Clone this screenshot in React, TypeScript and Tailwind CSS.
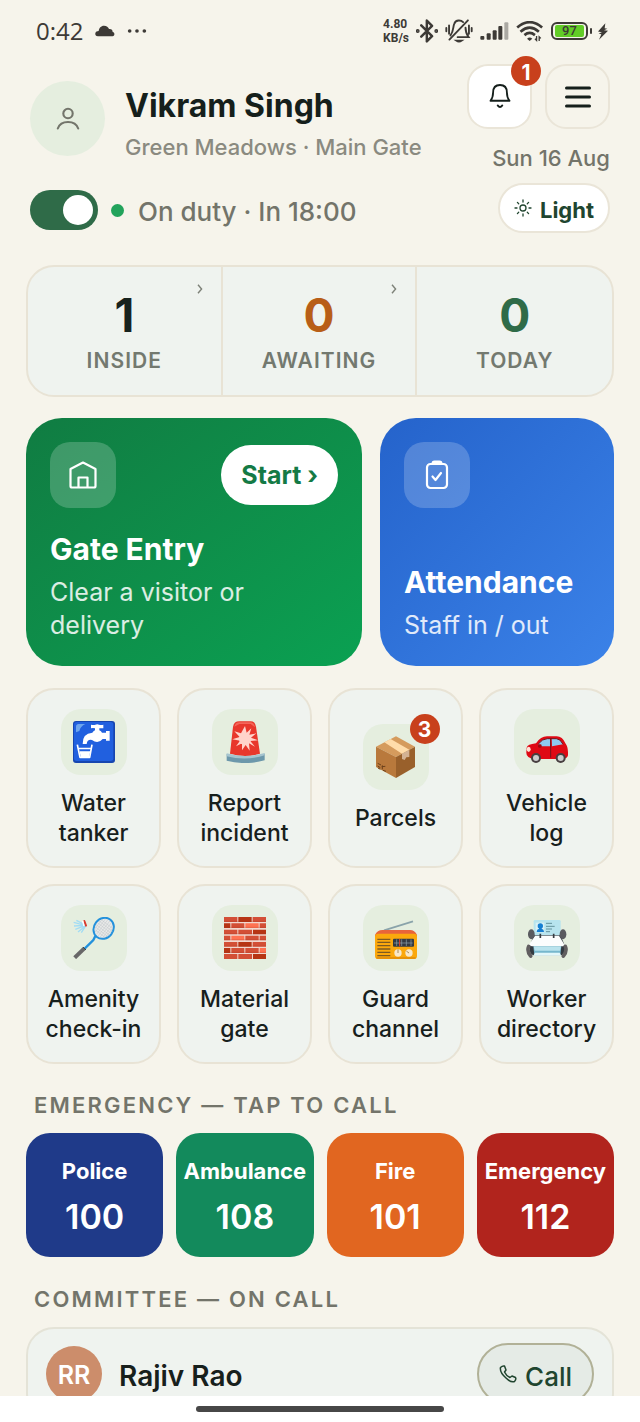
import type { ReactNode } from 'react';

/* ---------- status bar ---------- */

function StatusBar() {
  return (
    <div className="flex h-14 shrink-0 items-center justify-between pt-1.5 pr-8 pl-9 text-[#3d3a36]">
      <div className="flex items-center gap-3">
        <span className="font-['Open_Sans','Noto_Sans',sans-serif] text-2xl font-medium">0:42</span>
        <svg viewBox="0 0 60 34" className="h-3 w-5" fill="currentColor" aria-hidden="true">
          <path d="M9 33C2 33 0 28 1 24c1-5 5-7 10-7C12 8 18 1 27 1c8 0 13 4 15 10 7-1 11 3 11 9 4 1 6 4 5 8-1 4-4 5-8 5Z" />
        </svg>
        <svg viewBox="0 0 56 12" className="h-1 w-5" fill="currentColor" aria-hidden="true">
          <circle cx="6" cy="6" r="5.5" />
          <circle cx="28" cy="6" r="5.5" />
          <circle cx="50" cy="6" r="5.5" />
        </svg>
      </div>
      <div className="flex items-center gap-[7px]">
        <span className="flex flex-col font-[Roboto,sans-serif] text-[12px] leading-[14px] font-bold">
          <span>4.80</span>
          <span>KB/s</span>
        </span>
        <svg viewBox="0 0 63 68" className="h-6 w-[22px]" fill="none" stroke="currentColor" strokeWidth="7" strokeLinejoin="round" strokeLinecap="round" aria-hidden="true">
          <path d="M15 18 46 49 31 64V4L46 19 15 50" />
          <circle cx="5" cy="34" r="2" fill="currentColor" />
          <circle cx="58" cy="34" r="2" fill="currentColor" />
        </svg>
        <svg viewBox="0 0 80 70" className="h-6 w-7" fill="none" stroke="currentColor" strokeWidth="5.5" strokeLinecap="round" aria-hidden="true">
          <path d="M3 26v10M11 19v24M69 19v24M77 26v10M52 9C46 3 31 1 26 14c-4 9-1 21-11 34M36 53h32c-7-9-9-16-9-28M66 4 12 60" />
          <path d="M32 63q8 6 16 0Z" fill="currentColor" />
        </svg>
        <svg viewBox="0 0 87 54" className="h-[18px] w-[29px]" fill="currentColor" aria-hidden="true">
          <rect x="1" y="42" width="12" height="11" rx="3" />
          <rect x="20" y="34" width="12" height="19" rx="3" />
          <rect x="38" y="25" width="12" height="28" rx="3" />
          <rect x="55" y="12" width="12" height="41" rx="3" />
          <rect x="73" y="1" width="12" height="52" rx="3" opacity=".4" />
        </svg>
        <svg viewBox="0 0 84 64" className="h-[21px] w-7" fill="none" stroke="currentColor" strokeWidth="8" aria-hidden="true">
          <path d="M3 20Q41-13 79 20M13 33Q41 8 69 33M25 43Q41 30 57 43" />
          <path d="M33 54q8-7 16 0l-8 7Z" fill="currentColor" stroke="none" />
          <path d="M62 46v13l-5-5M70 61V48l5 5" strokeWidth="4" />
        </svg>
        <div className="flex items-center gap-0.5">
          <span className="flex h-[18px] items-center rounded-[6px] border-2 border-current p-0.5">
            <span className="flex h-3 w-[29px] items-center justify-center rounded-xs bg-[#62cc27] font-[Roboto,sans-serif] text-[13px] leading-3 font-medium">97</span>
          </span>
          <span className="h-1.5 w-0.5 rounded-full bg-current" />
          <svg viewBox="0 0 30 50" className="ml-1 h-[17px] w-2.5" fill="currentColor" aria-hidden="true">
            <path d="M22 0 0 25l12 2-10 4 8 2-7 17 27-27-12-2 10-4-8-2Z" />
          </svg>
        </div>
      </div>
    </div>
  );
}

/* ---------- header ---------- */

function Badge({ children }: { children: ReactNode }) {
  return (
    <span className="absolute -top-2.5 -right-[11px] flex size-[30px] items-center justify-center rounded-full bg-[#c8401c] pt-0.5 text-[21px] leading-none font-bold text-white">
      {children}
    </span>
  );
}

function Header() {
  return (
    <header className="flex justify-between px-[30px]">
      <div className="pt-[17px]">
        <div className="flex items-start gap-5">
          <span className="flex size-[75px] items-center justify-center rounded-full bg-[#e5eedf] text-[#73756b]">
            <svg viewBox="0 0 24 24" className="size-6" fill="none" stroke="currentColor" strokeWidth="2.1" strokeLinecap="round" aria-hidden="true">
              <circle cx="12" cy="6.5" r="4.7" />
              <path d="M1.8 21.5Q4 15 12 15T22.2 21.5" />
            </svg>
          </span>
          <div className="pt-1">
            <h1 className="text-[32px] leading-[42px] font-bold text-[#151f1b]">Vikram Singh</h1>
            <p className="pt-1 text-[22px] leading-8 font-medium text-[#8a8a80]">Green Meadows · Main Gate</p>
          </div>
        </div>
        <label className="mt-[25px] flex items-center text-[26px] leading-10 font-medium text-[#73746a]">
          <input
            type="checkbox"
            role="switch"
            defaultChecked
            className="flex h-10 w-[68px] appearance-none items-center rounded-full bg-[#a9aca4] px-[5px] after:size-[30px] after:rounded-full after:bg-white after:content-[''] checked:justify-end checked:bg-[#2f6b48]"
          />
          <span className="ml-[13px] size-[13px] rounded-full bg-[#22a35b]" />
          <span className="ml-3.5 pt-1">On duty · In 18:00</span>
        </label>
      </div>
      <div className="flex flex-col items-end">
        <div className="flex gap-[13px]">
          <button type="button" aria-label="Notifications" className="relative flex size-[65px] items-center justify-center rounded-[21px] border-2 border-[#eae5d8] bg-white text-[#151f1b]">
            <svg viewBox="0 0 66 76" className="h-[25px] w-[22px]" fill="none" stroke="currentColor" strokeWidth="5.5" strokeLinecap="round" strokeLinejoin="round" aria-hidden="true">
              <path d="M4 51C11 43 12 38 12 26 12 11 20 3 33 3s21 8 21 23c0 12 1 17 8 25ZM26 65q7 10 14 0" />
            </svg>
            <Badge>1</Badge>
          </button>
          <button type="button" aria-label="Menu" className="flex size-[65px] items-center justify-center rounded-[21px] border-2 border-[#eae5d8] text-[#151f1b]">
            <svg viewBox="0 0 26 22" className="h-[22px] w-[26px]" stroke="currentColor" strokeWidth="3" strokeLinecap="round" aria-hidden="true">
              <path d="M1.5 2h23M1.5 11h23M1.5 20h23" />
            </svg>
          </button>
        </div>
        <p className="mt-3.5 text-[22px] leading-[30px] font-medium text-[#73746a]">Sun 16 Aug</p>
        <button type="button" className="mt-2.5 flex h-[50px] items-center gap-2 rounded-full border-2 border-[#eae5d8] bg-white px-3.5 text-[22px] font-bold text-[#20452f]">
          <svg viewBox="0 0 18 18" className="size-[18px]" fill="none" stroke="currentColor" strokeWidth="1.3" strokeLinecap="round" aria-hidden="true">
            <circle cx="9" cy="9" r="3" />
            <path d="M9 1v2M9 15v2M1 9h2M15 9h2M3.4 3.4l1.3 1.3M13.3 13.3l1.3 1.3M3.4 14.6l1.3-1.3M13.3 4.7l1.3-1.3" />
          </svg>
          <span className="pt-1">Light</span>
        </button>
      </div>
    </header>
  );
}

/* ---------- counters ---------- */

const stats = [
  { value: 1, label: 'INSIDE', color: 'text-[#17221d]', link: true },
  { value: 0, label: 'AWAITING', color: 'text-[#b85e17]', link: true },
  { value: 0, label: 'TODAY', color: 'text-[#2f6b48]', link: false },
];

function Stats() {
  return (
    <section className="mt-8 grid grid-cols-3 divide-x-2 divide-[#e8e3d5] rounded-[28px] border-2 border-[#e8e3d5] bg-[#eff3ef]">
      {stats.map((s) => (
        <div key={s.label} className="relative flex flex-col items-center pt-5 pb-5">
          <span className={`text-[46px] leading-[56px] font-bold ${s.color}`}>{s.value}</span>
          <span className="pt-1 text-[21px] leading-7 font-semibold tracking-wider text-[#73796f]">{s.label}</span>
          {s.link && (
            <svg viewBox="0 0 6 10" className="absolute top-[17px] right-[18px] h-2.5 w-1.5" fill="none" stroke="#7d8178" strokeWidth="1.4" aria-hidden="true">
              <path d="m1 .7 3.6 4.3L1 9.3" />
            </svg>
          )}
        </div>
      ))}
    </section>
  );
}

/* ---------- main actions ---------- */

function ActionCards() {
  return (
    <section className="mt-[21px] grid grid-cols-[336fr_234fr] gap-[18px] text-left text-white">
      <button type="button" className="flex h-[248px] flex-col justify-between rounded-[36px] bg-linear-to-br from-[#107c42] to-[#0aa152] px-6 pt-6 pb-6 text-left">
        <span className="flex w-full items-center justify-between">
          <span className="flex size-[66px] items-center justify-center rounded-[20px] bg-white/20">
            <svg viewBox="0 0 28 28" className="size-7" fill="none" stroke="currentColor" strokeWidth="2.2" strokeLinejoin="round" aria-hidden="true">
              <path d="M1.5 8 14 1.5 26.5 8v17q0 1.5-1.5 1.5H3q-1.500 0-1.500-1.500ZM9.500 26v-9.500h9V26" />
            </svg>
          </span>
          <span className="flex h-[60px] items-center rounded-full bg-white px-5 pt-0.5 text-[25px] font-bold text-[#147a45]">Start ›</span>
        </span>
        <span>
          <span className="block text-[30px] leading-9 font-bold">Gate Entry</span>
          <span className="mt-[9px] block max-w-[230px] text-[25px] leading-[33px] text-white/85">Clear a visitor or delivery</span>
        </span>
      </button>
      <button type="button" className="flex h-[248px] flex-col items-start justify-between rounded-[36px] bg-linear-to-br from-[#2563cb] to-[#3b82e8] px-6 pt-6 pb-6 text-left">
        <span className="flex size-[66px] items-center justify-center rounded-[20px] bg-white/20">
          <svg viewBox="0 0 24 30" className="h-[30px] w-6" fill="none" stroke="currentColor" strokeWidth="2.2" strokeLinecap="round" strokeLinejoin="round" aria-hidden="true">
            <rect x="2" y="4" width="20" height="24" rx="3.500" />
            <path d="M8 3.500Q8 2 9.500 2h5Q16 2 16 3.500" strokeWidth="3" />
            <path d="m7.500 16.500 3 3.500 5.500-7" />
          </svg>
        </span>
        <span>
          <span className="block text-[30px] leading-9 font-bold">Attendance</span>
          <span className="mt-[9px] block text-[25px] leading-[33px] text-white/85">Staff in / out</span>
        </span>
      </button>
    </section>
  );
}

/* ---------- shortcut pictograms ---------- */

function Pictogram({ children }: { children: ReactNode }) {
  return (
    <svg viewBox="0 0 126 126" className="size-[42px]" fill="none" aria-hidden="true">
      {children}
    </svg>
  );
}

const tap = (
  <Pictogram>
    <rect width="126" height="126" rx="9" fill="#1746b0" />
    <rect x="3" y="3" width="118" height="117" rx="8" fill="#2160df" />
    <path d="M9 34V17q0-8 8-8h20Q22 16 19 30Z" fill="#6ea5ed" />
    <path d="M54 11q9 2 13 0 6-3 11 0 6 2 13 0v11q-7-1-12 0v6q6 2 8 7h12v-5h11v29H99v-5H89q-14 17-32 3-14-3-16 12H29Q28 37 58 35q3-5 8-7v-6q-6-2-12 0Z" fill="#fff" />
    <path d="m13 71 8 38h29l7-38" stroke="#fff" strokeWidth="5" strokeLinejoin="round" />
    <path d="M17 80h37v5H18ZM20 91h32l-4 17H23Z" fill="#fff" />
  </Pictogram>
);

const siren = (
  <Pictogram>
    <path d="M18 98 27 17Q30 1 46 1h34q13 0 16 16l12 81Q64 112 18 98Z" fill="#e8372c" />
    <path d="M31 17Q34 4 47 4h31q12 0 15 15L80 9H46Z" fill="#f4665a" />
    <path d="m63 15 5 20 14-13-6 19 21-4-16 13 21 8-23 2 14 17-18-10 2 22-12-17-11 16v-21l-18 9 12-17-23-4 22-7-16-17 20 6Z" fill="#ffd3cb" />
    <circle cx="63" cy="54" r="18" fill="#ffd3cb" />
    <path d="M8 99q56 22 114-1v20q-56 16-114 1Z" fill="#6d98ab" />
    <path d="M8 97q56 16 114-1v7q-56 18-114 3Z" fill="#a5c4cf" />
  </Pictogram>
);

const parcel = (
  <Pictogram>
    <path d="M3 32 63 1l57 31-57 31Z" fill="#d59b5d" />
    <path d="M3 32 63 63v63L3 93Z" fill="#b9793c" />
    <path d="m120 32-57 31v63l57-33Z" fill="#99602b" />
    <path d="m28 19 19-10 56 32-22 12Z" fill="#ffdcaa" />
    <path d="m81 53 22-12v22l-9 1-5 8-8-3Z" fill="#d3b294" />
    <path d="m8 82 10 5M8 90l8 5M9 96l7 4M22 88v12M20 92l11-1M24 103l9 3" stroke="#6e421b" strokeWidth="3" />
  </Pictogram>
);

const car = (
  <Pictogram>
    <path d="M2 80Q4 70 30 67 44 46 63 46h29q17 0 27 22 8 10 7 35-1 9-16 11H25Q0 112 1 94Z" fill="#df0914" />
    <path d="M38 68q11-15 26-15h8v23H38ZM77 53h14q12 0 20 17L78 76Z" fill="#8fc9ef" />
    <path d="M37 69q12-16 27-16h27q12 0 20 17M74 52v26M74 78v32" stroke="#751419" strokeWidth="3" />
    <ellipse cx="8" cy="85" rx="6" ry="8" fill="#ffe2d7" />
    <rect x="36" y="70" width="11" height="10" rx="4" fill="#a3070e" />
    <circle cx="30" cy="111" r="15" fill="#473f40" />
    <circle cx="30" cy="111" r="9" fill="#ccc" />
    <circle cx="104" cy="111" r="15" fill="#473f40" />
    <circle cx="104" cy="111" r="9" fill="#ccc" />
  </Pictogram>
);

const racket = (
  <Pictogram>
    <g transform="rotate(38 92 34)">
      <ellipse cx="92" cy="34" rx="29" ry="33" fill="#e8e9e9" stroke="#2391dc" strokeWidth="6" />
      <path d="M72 15v38M79 9v50M86 6v56M93 5v58M100 6v56M107 10v48M113 16v36M70 18h45M67 25h51M66 32h53M66 39h53M68 46h49M72 53h41" stroke="#c2c8ca" strokeWidth="1.500" />
    </g>
    <path d="m67 57-6 12-29 29" stroke="#2391dc" strokeWidth="7" />
    <path d="m34 94-29 28" stroke="#686768" strokeWidth="12" />
    <path d="m30 90 9 9" stroke="#3e4549" strokeWidth="3" />
    <path d="m36 25-34-9M35 23 10 10M35 25 3 27M36 26 7 37M37 27 15 45M37 28 25 47" stroke="#a2dcf4" strokeWidth="4" />
    <path d="m34 12 5 14" stroke="#d93b2e" strokeWidth="6" strokeLinecap="round" />
    <path d="m29 12 4 15" stroke="#fff" strokeWidth="4" />
  </Pictogram>
);

const bricks = (
  <Pictogram>
    <rect width="126" height="126" fill="#f1d7ce" />
    <path d="M0 0h40v15H0ZM86 0h40v15H86ZM22 19h39v14H22ZM107 19h19v14h-19ZM0 38h40v14H0ZM43 38h41v14H43ZM64 56h40v14H64ZM0 56h19v14H0ZM107 56h19v14h-19ZM0 75h40v14H0ZM86 75h40v14H86ZM22 93h39v15H22ZM64 93h40v15H64ZM43 111h41v15H43ZM0 111h40v15H0Z" fill="#d34f36" />
    <path d="M43 0h40v15H43ZM0 19h19v14H0ZM87 38h39v14H87ZM43 75h40v14H43ZM0 93h19v15H0ZM87 111h39v15H87Z" fill="#b73514" />
    <path d="M64 19h40v14H64ZM22 56h39v14H22ZM107 93h19v15h-19Z" fill="#ff7252" />
    <path d="M0 13h126M0 31h126M0 50h126M0 68h126M0 87h126M0 106h126" stroke="#9f3424" strokeOpacity=".35" strokeWidth="2" />
  </Pictogram>
);

const radio = (
  <Pictogram>
    <path d="m27 40 87-27" stroke="#8aa3aa" strokeWidth="5" />
    <path d="M0 54Q7 39 22 39h83q14 0 21 15v18H0Z" fill="#e8643a" />
    <rect y="50" width="126" height="76" rx="9" fill="#fba80c" />
    <rect x="54" y="65" width="63" height="24" rx="3" fill="#333a42" />
    <path d="M57 78h56M65 67v20M80 67v20M94 67v20M108 67v20" stroke="#8ea5ae" strokeWidth="2" />
    <path d="M74 66v22" stroke="#e6412f" strokeWidth="3" />
    <path d="M7 67h39M7 76h39M7 86h39M7 96h39M7 106h39M7 116h39" stroke="#7c5a22" strokeWidth="4" />
    <circle cx="69" cy="108" r="11" fill="#f8e8cb" />
    <circle cx="102" cy="108" r="11" fill="#f8e8cb" />
    <path d="M69 108V97M102 108l-8-6" stroke="#a48b61" strokeWidth="3" />
    <path d="M4 123h118" stroke="#e18b08" strokeWidth="4" />
  </Pictogram>
);

const cardIndex = (
  <Pictogram>
    <rect x="23" y="9" width="81" height="55" rx="4" fill="#b7e4ee" />
    <rect x="29" y="17" width="26" height="29" fill="#d8f1f7" />
    <circle cx="43" cy="27" r="8" fill="#167fd2" />
    <path d="M32 45q0-10 11-10t11 10ZM39 32h8v7h-8Z" fill="#167fd2" />
    <path d="M60 19h18M60 28h26M60 36h18M60 44h12" stroke="#63929d" strokeWidth="3" />
    <path d="M22 55h82l14 36q-2 24-14 24H22Q9 109 11 92Z" fill="#343b42" />
    <path d="m27 56-17 26q0 6 8 6h90q9 0 6-7L99 56Z" fill="#fbfdfd" />
    <path d="M22 88h84l-3 26H25Z" fill="#76b7cd" />
    <path d="M23 88h82l-3 13H26Z" fill="#b9e3ed" />
    <path d="M27 107h74l5 9H22Z" fill="#e2f7fa" />
    <ellipse cx="16" cy="52" rx="10" ry="15" fill="#5a5b60" />
    <ellipse cx="111" cy="52" rx="10" ry="15" fill="#5a5b60" />
    <path d="M8 88q-6 15 6 29M118 88q6 15-6 29" stroke="#615e60" strokeWidth="11" strokeLinecap="round" />
    <path d="M43 50v13M83 50v13" stroke="#353b41" strokeWidth="5" />
  </Pictogram>
);

/* ---------- shortcuts ---------- */

const shortcuts = [
  { label: 'Water tanker', icon: tap },
  { label: 'Report incident', icon: siren },
  { label: 'Parcels', icon: parcel, count: 3 },
  { label: 'Vehicle log', icon: car },
  { label: 'Amenity check-in', icon: racket },
  { label: 'Material gate', icon: bricks },
  { label: 'Guard channel', icon: radio },
  { label: 'Worker directory', icon: cardIndex },
];

function Shortcuts() {
  return (
    <section className="mt-[22px] grid auto-rows-[180px] grid-cols-4 gap-4">
      {shortcuts.map((s) => (
        <button key={s.label} type="button" className="flex flex-col items-center justify-center gap-[13px] rounded-[28px] border-2 border-[#e8e3d5] bg-[#eff3ef] px-3 text-[23px] leading-[30px] font-medium text-[#17201c]">
          <span className="relative flex size-[66px] items-center justify-center rounded-[20px] bg-[#e5eedf]">
            {s.icon}
            {s.count && <Badge>{s.count}</Badge>}
          </span>
          <span className="flex flex-col items-center whitespace-nowrap">
            {s.label.split(' ').map((word) => (
              <span key={word}>{word}</span>
            ))}
          </span>
        </button>
      ))}
    </section>
  );
}

/* ---------- emergency numbers ---------- */

const emergency = [
  { label: 'Police', number: '100', bg: 'bg-[#1f3a89]' },
  { label: 'Ambulance', number: '108', bg: 'bg-[#138a5c]' },
  { label: 'Fire', number: '101', bg: 'bg-[#e16620]' },
  { label: 'Emergency', number: '112', bg: 'bg-[#b1241d]' },
];

function SectionTitle({ children }: { children: ReactNode }) {
  return <h2 className="px-2 text-[22px] leading-8 font-semibold tracking-widest text-[#73746a]">{children}</h2>;
}

function Emergency() {
  return (
    <section className="mt-[25px]">
      <SectionTitle>EMERGENCY — TAP TO CALL</SectionTitle>
      <div className="mt-3 grid grid-cols-4 gap-[13px]">
        {emergency.map((e) => (
          <a key={e.label} href={`tel:${e.number}`} className={`flex h-[124px] min-w-0 flex-col items-center justify-center gap-2 rounded-3xl pt-1.5 text-white ${e.bg}`}>
            <span className="text-[22px] leading-[30px] font-bold">{e.label}</span>
            <span className="text-[34px] leading-[46px] font-semibold">{e.number}</span>
          </a>
        ))}
      </div>
    </section>
  );
}

/* ---------- committee ---------- */

function Committee() {
  return (
    <section className="mt-[26px]">
      <SectionTitle>COMMITTEE — ON CALL</SectionTitle>
      <div className="mt-3 flex items-center rounded-[28px] border-2 border-[#e4e3d7] bg-[#eff3ef] px-[18px] py-3.5">
        <span className="flex size-14 items-center justify-center rounded-full bg-[#cc8d6b] pt-1 text-[25px] font-semibold text-white">RR</span>
        <span className="ml-[17px] flex-1 pt-1 text-[28px] leading-10 font-semibold text-[#17201c]">Rajiv Rao</span>
        <a href="tel:" className="flex h-[62px] items-center gap-2 rounded-full border-2 border-[#b1b197] bg-[#e5ebe6] px-5 text-[26px] font-medium text-[#20452f]">
          <svg viewBox="0 0 18 18" className="size-[18px]" fill="none" stroke="currentColor" strokeWidth="1.500" strokeLinejoin="round" aria-hidden="true">
            <path d="M1.500 2.500Q3.500.5 5.500 1L7 5 5.500 7Q7 10.500 11 12.500l2-1.500 3.500 1.500q1 2-1 4Q12 18 7 13 .5 7.500 1.500 2.500Z" />
          </svg>
          <span className="pt-1">Call</span>
        </a>
      </div>
    </section>
  );
}

export default function App() {
  return (
    <div className="flex h-dvh flex-col bg-[#f6f4eb] font-[Inter,'Noto_Sans',sans-serif]">
      <StatusBar />
      <main className="min-h-0 flex-1 overflow-hidden pt-2">
        <Header />
        <div className="px-[26px]">
          <Stats />
          <ActionCards />
          <Shortcuts />
          <Emergency />
          <Committee />
        </div>
      </main>
      <footer className="flex h-[26px] shrink-0 items-center justify-center bg-white">
        <span className="h-1.5 w-[248px] rounded-full bg-[#474747]" />
      </footer>
    </div>
  );
}
